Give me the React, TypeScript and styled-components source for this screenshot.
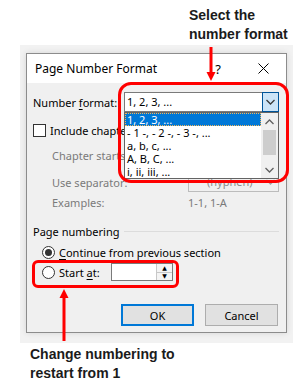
import React from 'react';
import styled, { createGlobalStyle } from 'styled-components';

const GlobalStyle = createGlobalStyle`
  html, body { margin: 0; padding: 0; background: #fff; }
  body { width: 306px; height: 389px; overflow: hidden; }
`;

const UI_FONT = `"Noto Sans", "Open Sans", "DejaVu Sans", sans-serif`;

const Page = styled.div`
  position: relative;
  width: 306px;
  height: 389px;
  background: #fff;
  display: flex;
  flex-direction: column;
  align-items: flex-start;
  font-family: ${UI_FONT};
  font-size: 11px;
  color: #000;
`;

const Note = styled.div<{ $left: number; $top: number }>`
  margin: ${p => p.$top}px 0 0 ${p => p.$left}px;
  font-family: "Liberation Sans", Arial, sans-serif;
  font-weight: 700;
  font-size: 14px;
  line-height: 19px;
  color: #1b1b1b;
  white-space: nowrap;
`;

const Backdrop = styled.div`
  margin: 1px 0 0 20px;
  width: 273px;
  box-sizing: border-box;
  padding: 8px 6px 10px;
  background: #f2f2f2;
`;

const Dialog = styled.div`
  width: 261px;
  height: 280px;
  box-sizing: border-box;
  border: 1px solid #8c8c8c;
  background: #f0f0f0;
  display: flex;
  flex-direction: column;
  box-shadow: 0 0 6px rgba(0, 0, 0, 0.12);
  overflow: hidden;
`;

const TitleBar = styled.div`
  height: 29px;
  background: #fff;
  display: flex;
  align-items: center;
  padding-left: 8px;
`;

const Title = styled.div`
  flex: 1;
  font-size: 12px;
`;

const HelpGlyph = styled.div`
  width: 14px;
  text-align: center;
  font-size: 13px;
  margin-right: 15px;
`;

const CloseButton = styled.div`
  width: 46px;
  height: 29px;
  display: flex;
  align-items: center;
  justify-content: center;
`;

const Body = styled.div`
  flex: 1;
  padding: 9px 7px 0 6px;
  display: flex;
  flex-direction: column;
`;

const FieldRow = styled.div<{ $mt?: number }>`
  display: grid;
  grid-template-columns: 91px 155px;
  align-items: center;
  height: 20px;
  margin-top: ${p => p.$mt ?? 0}px;
`;

const IndentRow = styled.div<{ $mt?: number }>`
  display: grid;
  grid-template-columns: 136px 91px;
  align-items: center;
  height: 20px;
  padding-left: 19px;
  margin-top: ${p => p.$mt ?? 0}px;
`;

const FlexRow = styled.div<{ $mt?: number; $pl?: number }>`
  display: flex;
  align-items: center;
  height: 20px;
  padding-left: ${p => p.$pl ?? 0}px;
  margin-top: ${p => p.$mt ?? 0}px;
`;

const Label = styled.span<{ $muted?: boolean }>`
  color: ${p => (p.$muted ? '#7a7a7a' : '#000')};
  white-space: nowrap;
`;

const Key = styled.span`
  text-decoration: underline;
  text-underline-offset: 2px;
`;

const Combo = styled.div<{ $disabled?: boolean }>`
  position: relative;
  height: 20px;
  box-sizing: border-box;
  border: 1px solid ${p => (p.$disabled ? '#bcbcbc' : '#7a7a7a')};
  background: ${p => (p.$disabled ? '#f0f0f0' : '#fff')};
  display: flex;
  align-items: stretch;
`;

const ComboText = styled.div<{ $disabled?: boolean; $indent?: number }>`
  flex: 1;
  padding-left: ${p => p.$indent ?? 2}px;
  line-height: 18px;
  color: ${p => (p.$disabled ? '#8a8a8a' : '#000')};
  white-space: nowrap;
  overflow: hidden;
`;

const DropButton = styled.div<{ $active?: boolean }>`
  width: 17px;
  margin: -1px -1px -1px 0;
  box-sizing: border-box;
  border: 1px solid ${p => (p.$active ? '#005499' : 'transparent')};
  background: ${p => (p.$active ? '#cce4f7' : 'transparent')};
  display: flex;
  align-items: center;
  justify-content: center;
`;

const DropList = styled.div`
  position: absolute;
  left: -1px;
  top: calc(100% + 1px);
  width: 155px;
  height: 67px;
  box-sizing: border-box;
  border: 1px solid #646464;
  background: #fff;
  display: flex;
  z-index: 2;
`;

const Items = styled.div`
  flex: 1;
  overflow: hidden;
`;

const Item = styled.div<{ $selected?: boolean }>`
  height: 13px;
  line-height: 13px;
  padding-left: 2px;
  box-sizing: border-box;
  white-space: nowrap;
  background: ${p => (p.$selected ? '#0078d7' : 'transparent')};
  color: ${p => (p.$selected ? '#fff' : '#000')};
  outline: ${p => (p.$selected ? '1px dotted #f3b65b' : 'none')};
  outline-offset: -1px;
`;

const ScrollBar = styled.div`
  width: 17px;
  background: #f0f0f0;
  display: flex;
  flex-direction: column;
`;

const ScrollArrow = styled.div`
  height: 17px;
  display: flex;
  align-items: center;
  justify-content: center;
`;

const Thumb = styled.div`
  height: 25px;
  margin: 0 2px;
  background: #cdcdcd;
`;

const Spacer = styled.div`
  flex: 1;
`;

const CheckBox = styled.div`
  width: 13px;
  height: 13px;
  box-sizing: border-box;
  border: 1px solid #333;
  background: #fff;
  margin-right: 4px;
`;

const GroupHeader = styled.div<{ $mt?: number }>`
  display: grid;
  grid-template-columns: 91px 1fr;
  align-items: center;
  height: 20px;
  margin-top: ${p => p.$mt ?? 0}px;
`;

const GroupLine = styled.div`
  height: 1px;
  background: #dcdcdc;
`;

const OptionCell = styled.div<{ $width?: number }>`
  display: flex;
  align-items: center;
  width: ${p => (p.$width ? `${p.$width}px` : 'auto')};
`;

const Radio = styled.div<{ $checked?: boolean }>`
  width: 13px;
  height: 13px;
  box-sizing: border-box;
  border: 1px solid #333;
  border-radius: 50%;
  background: #fff;
  margin-right: 4px;
  display: flex;
  align-items: center;
  justify-content: center;
  &::after {
    content: '';
    width: 7px;
    height: 7px;
    border-radius: 50%;
    background: ${p => (p.$checked ? '#333' : 'transparent')};
  }
`;

const SpinBox = styled.div`
  width: 62px;
  height: 18px;
  box-sizing: border-box;
  border: 1px solid #7a7a7a;
  background: #fff;
  display: flex;
  justify-content: flex-end;
`;

const SpinButtons = styled.div`
  width: 15px;
  display: flex;
  flex-direction: column;
  border-left: 1px solid #c8c8c8;
`;

const SpinHalf = styled.div<{ $top?: boolean }>`
  flex: 1;
  display: flex;
  align-items: center;
  justify-content: center;
  background: #f4f4f4;
  border-bottom: ${p => (p.$top ? '1px solid #c8c8c8' : 'none')};
  font-size: 6px;
  line-height: 1;
  color: #000;
`;

const ButtonRow = styled.div`
  margin-top: 22px;
  display: flex;
  justify-content: flex-end;
  gap: 11px;
  padding-right: 1px;
`;

const Button = styled.div<{ $default?: boolean }>`
  width: 73px;
  height: 22px;
  box-sizing: border-box;
  border: ${p => (p.$default ? '2px solid #0078d7' : '1px solid #adadad')};
  background: #e1e1e1;
  display: flex;
  align-items: center;
  justify-content: center;
`;

const RedBox = styled.div<{ $x: number; $y: number; $w: number; $h: number; $r: number }>`
  position: absolute;
  left: ${p => p.$x}px;
  top: ${p => p.$y}px;
  width: ${p => p.$w}px;
  height: ${p => p.$h}px;
  box-sizing: border-box;
  border: 3px solid #ff0000;
  border-radius: ${p => p.$r}px;
  pointer-events: none;
  z-index: 5;
`;

const ArrowSvg = styled.svg<{ $x: number; $y: number }>`
  position: absolute;
  left: ${p => p.$x}px;
  top: ${p => p.$y}px;
  z-index: 5;
`;

const Chevron: React.FC<{ up?: boolean; color?: string; w?: number }> = ({ up, color = '#444', w = 9 }) => (
  <svg width={w} height={6} viewBox="0 0 9 6">
    <polyline
      points={up ? '0.5,5 4.5,1 8.5,5' : '0.5,1 4.5,5 8.5,1'}
      fill="none"
      stroke={color}
      strokeWidth={1.3}
    />
  </svg>
);

const formats = ['1, 2, 3, ...', '- 1 -, - 2 -, - 3 -, ...', 'a, b, c, ...', 'A, B, C, ...', 'i, ii, iii, ...'];

export default function App() {
  return (
    <Page>
      <GlobalStyle />
      <Note $left={189} $top={6}>
        Select the
        <br />
        number format
      </Note>
      <Backdrop>
        <Dialog>
          <TitleBar>
            <Title>Page Number Format</Title>
            <HelpGlyph>?</HelpGlyph>
            <CloseButton>
              <svg width="11" height="11" viewBox="0 0 11 11">
                <path d="M0.5 0.5 L10.5 10.5 M10.5 0.5 L0.5 10.5" stroke="#000" strokeWidth="1" />
              </svg>
            </CloseButton>
          </TitleBar>
          <Body>
            <FieldRow>
              <Label>
                Number <Key>f</Key>ormat:
              </Label>
              <Combo>
                <ComboText>1, 2, 3, ...</ComboText>
                <DropButton $active>
                  <Chevron color="#3a3a3a" />
                </DropButton>
                <DropList>
                  <Items>
                    {formats.map((f, i) => (
                      <Item key={f} $selected={i === 0}>
                        {f}
                      </Item>
                    ))}
                  </Items>
                  <ScrollBar>
                    <ScrollArrow>
                      <Chevron up color="#606060" />
                    </ScrollArrow>
                    <Thumb />
                    <Spacer />
                    <ScrollArrow>
                      <Chevron color="#606060" />
                    </ScrollArrow>
                  </ScrollBar>
                </DropList>
              </Combo>
            </FieldRow>
            <FlexRow $mt={8}>
              <CheckBox />
              <Label>Include chapter number</Label>
            </FlexRow>
            <IndentRow $mt={5}>
              <Label $muted>Chapter starts with style:</Label>
              <Combo $disabled>
                <ComboText $disabled>Heading 1</ComboText>
              </Combo>
            </IndentRow>
            <IndentRow $mt={7}>
              <Label $muted>Use separator:</Label>
              <Combo $disabled>
                <ComboText $disabled $indent={18}>(hyphen)</ComboText>
                <DropButton>
                  <Chevron color="#a0a0a0" />
                </DropButton>
              </Combo>
            </IndentRow>
            <IndentRow>
              <Label $muted>Examples:</Label>
              <Label $muted>1-1, 1-A</Label>
            </IndentRow>
            <GroupHeader $mt={9}>
              <Label>Page numbering</Label>
              <GroupLine />
            </GroupHeader>
            <FlexRow $mt={1} $pl={9}>
              <OptionCell>
                <Radio $checked />
                <Label>
                  <Key>C</Key>ontinue from previous section
                </Label>
              </OptionCell>
            </FlexRow>
            <FlexRow $pl={9}>
              <OptionCell $width={69}>
                <Radio />
                <Label>
                  Start <Key>a</Key>t:
                </Label>
              </OptionCell>
              <SpinBox>
                <SpinButtons>
                  <SpinHalf $top>▲</SpinHalf>
                  <SpinHalf>▼</SpinHalf>
                </SpinButtons>
              </SpinBox>
            </FlexRow>
            <ButtonRow>
              <Button $default>OK</Button>
              <Button>Cancel</Button>
            </ButtonRow>
          </Body>
        </Dialog>
      </Backdrop>
      <Note $left={30} $top={2}>
        Change numbering to
        <br />
        restart from 1
      </Note>

      <RedBox $x={118} $y={82} $w={171} $h={101} $r={13} />
      <RedBox $x={32} $y={260} $w={147} $h={28} $r={6} />
      <ArrowSvg $x={204} $y={44} width={14} height={40} viewBox="0 0 14 40">
        <line x1="7" y1="3" x2="7" y2="29" stroke="#ff0000" strokeWidth="3" />
        <polygon points="2.5,28 11.5,28 7,37" fill="#ff0000" />
      </ArrowSvg>
      <ArrowSvg $x={57} $y={288} width={14} height={55} viewBox="0 0 14 55">
        <polygon points="7,1 2.5,10 11.5,10" fill="#ff0000" />
        <line x1="7" y1="9" x2="7" y2="53" stroke="#ff0000" strokeWidth="3" />
      </ArrowSvg>
    </Page>
  );
}
